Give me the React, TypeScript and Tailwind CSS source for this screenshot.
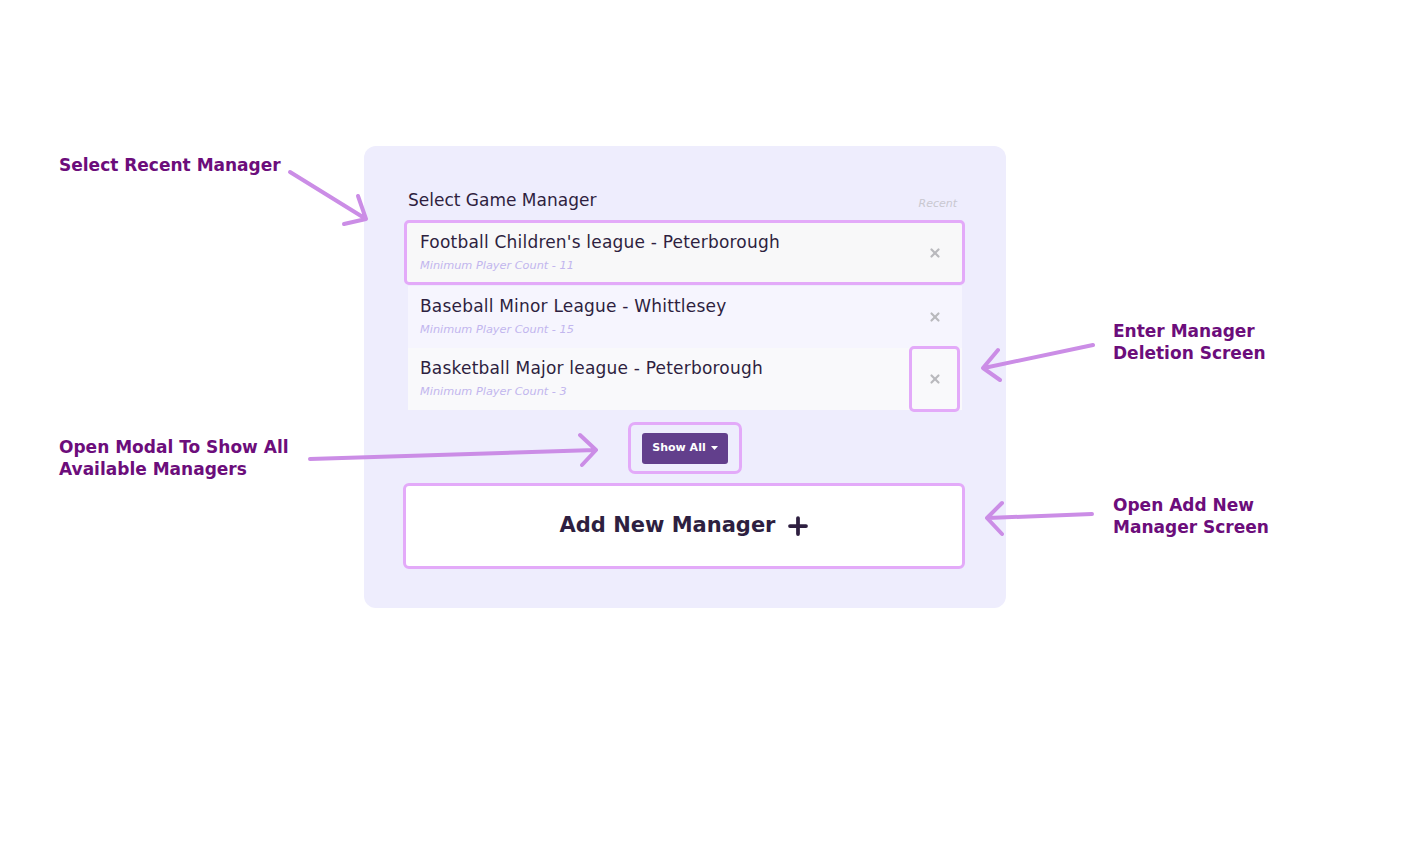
import { X } from 'lucide-react';

const managers = [
  { name: "Football Children's league - Peterborough", min: 11, bg: 'bg-[#f8f8f9]' },
  { name: 'Baseball Minor League - Whittlesey', min: 15, bg: 'bg-[#f6f5fe]' },
  { name: 'Basketball Major league - Peterborough', min: 3, bg: 'bg-[#f9f9fb]' },
];

function Arrows() {
  return (
    <svg className="absolute inset-0 pointer-events-none" width="1414" height="841" fill="none" stroke="#cb8de6" strokeWidth="4" strokeLinecap="round" strokeLinejoin="round">
      <path d="M290 172 L366 219 M358 196 L366 219 L344 224" />
      <path d="M310 459 L595 450 M580 435 L596 450 L582 465" />
      <path d="M1093 345 L984 368 M998 350 L983 368 L1000 380" />
      <path d="M1092 514 L988 518 M1002 503 L987 518 L1002 534" />
    </svg>
  );
}

function ManagerRow({ name, min, bg, index }: { name: string; min: number; bg: string; index: number }) {
  const first = index === 0;
  const last = index === managers.length - 1;
  return (
    <div
      className={`flex items-stretch ${bg} ${
        first ? '-ml-[4px] -mr-[3px] h-[65px] rounded-[5px] border-[3px] border-[#e3aaf9] pl-[13px]' : 'h-[62px] pl-[12px]'
      } ${index === 1 ? 'mt-[1px]' : ''}`}
    >
      <div className={`flex-1 ${first ? 'pt-[7px]' : 'pt-[8px]'}`}>
        <div className="text-[17px] leading-[24px] tracking-[0.2px] text-[#2e1f40]">{name}</div>
        <div className="mt-[2px] text-[11.3px] leading-[20px] italic text-[#c2b6ee]">Minimum Player Count - {min}</div>
      </div>
      <div
        className={`w-[51px] mr-[2px] flex items-center justify-center ${
          last ? '-my-[2px] rounded-[5px] border-[3px] border-[#e3aaf9]' : ''
        }`}
      >
        <X size={14} strokeWidth={3.75} className="text-[#b9b9bd]" />
      </div>
    </div>
  );
}

export default function App() {
  return (
    <div className="relative w-[1414px] h-[841px] bg-white flex pt-[146px] font-['DejaVu_Sans',sans-serif]">
      <div className="w-[364px] pl-[59px] text-[#6c0d7b] font-bold text-[17px] leading-[22px]">
        <div className="mt-[8px]">Select Recent Manager</div>
        <div className="mt-[260px]">
          Open Modal To Show All
          <br />
          Available Managers
        </div>
      </div>

      <div className="w-[642px] h-[462px] rounded-[12px] bg-[#eeedfd] px-[44px] pt-[42px]">
        <div className="flex items-end justify-between h-[24px]">
          <div className="text-[17px] leading-[24px] text-[#2e1f40]">Select Game Manager</div>
          <div className="text-[11px] leading-[14px] italic text-[#c9c8d0] mr-[5px] mb-[1px]">Recent</div>
        </div>
        <div className="mt-[8px] flex flex-col">
          {managers.map((m, i) => (
            <ManagerRow key={m.name} {...m} index={i} />
          ))}
        </div>
        <div className="flex justify-center mt-[12px]">
          <div className="w-[114px] h-[52px] rounded-[7px] border-[3px] border-[#e3aaf9] flex items-center justify-center">
            <button className="w-[86px] h-[31px] rounded-[3px] bg-[#623f8c] text-white text-[11px] font-bold flex items-center justify-center gap-[5px]">
              Show All
              <svg width="7" height="4" viewBox="0 0 7 4">
                <path d="M0 0 H7 L3.5 4 Z" fill="white" />
              </svg>
            </button>
          </div>
        </div>
        <div className="mt-[9px] -ml-[5px] -mr-[3px] h-[86px] rounded-[6px] border-[3px] border-[#e3aaf9] bg-white flex items-center justify-center gap-[13px]">
          <span className="text-[21px] font-bold text-[#2e1f40]">Add New Manager</span>
          <svg width="20" height="20" viewBox="0 0 20 20" stroke="#2e1f40" strokeWidth="3.75" strokeLinecap="round">
            <path d="M10 2 V18 M2 10 H18" />
          </svg>
        </div>
      </div>

      <div className="pl-[107px] text-[#6c0d7b] font-bold text-[17px] leading-[22px]">
        <div className="mt-[174px]">
          Enter Manager
          <br />
          Deletion Screen
        </div>
        <div className="mt-[130px]">
          Open Add New
          <br />
          Manager Screen
        </div>
      </div>

      <Arrows />
    </div>
  );
}
